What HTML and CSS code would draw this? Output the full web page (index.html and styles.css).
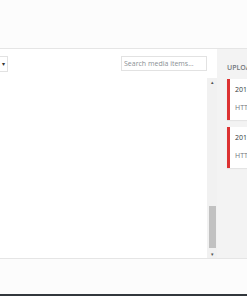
FILE: index.html
```html
<!DOCTYPE html>
<html lang="en">
<head>
    <meta charset="UTF-8">
    <meta name="viewport" content="width=device-width, initial-scale=1.0">
    <title>Media Library</title>
    <link rel="stylesheet" href="styles.css">
</head>
<body>

<div class="frame">
    <div class="frame-header"></div>

    <div class="frame-content">
        <div class="browser">
            <div class="toolbar">
                <div class="filter"><span class="caret">&#9662;</span></div>
                <input type="search" class="search" placeholder="Search media items...">
            </div>
            <div class="attachments">
                <ul class="attachment-list"></ul>
                <div class="scrollbar">
                    <span class="arrow">&#9652;</span>
                    <div class="track"><div class="thumb"></div></div>
                    <span class="arrow">&#9662;</span>
                </div>
            </div>
        </div>

        <div class="sidebar">
            <h2>Uploading</h2>
            <div class="upload-error">
                <span class="filename">2019-05-photo.jpg</span>
                <span class="message">HTTP error.</span>
            </div>
            <div class="upload-error">
                <span class="filename">2019-05-banner.png</span>
                <span class="message">HTTP error.</span>
            </div>
        </div>
    </div>

    <div class="frame-footer"></div>
</div>

</body>
</html>
```
FILE: styles.css
```css
html, body {
    margin: 0;
    padding: 0;
}
body {
    font-family: "Open Sans", Arial, sans-serif;
    background-color: #fcfcfc;
    width: 247px;
    height: 296px;
    overflow: hidden;
}
.frame {
    display: flex;
    flex-direction: column;
    height: 296px;
    border-bottom: 2px solid #32373c;
    box-sizing: border-box;
}
.frame-header {
    height: 48px;
    background: #fcfcfc;
    border-bottom: 1px solid #e5e5e5;
}
.frame-content {
    display: flex;
    height: 209px;
    border-bottom: 1px solid #e5e5e5;
}
.browser {
    flex: 1;
    display: flex;
    flex-direction: column;
    background: white;
    min-width: 0;
}
.toolbar {
    display: flex;
    justify-content: space-between;
    align-items: flex-start;
    height: 29px;
    padding: 7px 10px 0 0;
    box-sizing: border-box;
}
.filter {
    width: 70px;
    height: 16px;
    margin-left: -62px;
    border: 1px solid #e2e2e2;
    box-sizing: border-box;
    display: flex;
    align-items: center;
    justify-content: flex-end;
    padding-right: 2px;
}
.caret {
    font-size: 6px;
    line-height: 6px;
    color: #333;
}
.search {
    width: 86px;
    height: 15px;
    margin: 0;
    padding: 0 2px;
    border: 1px solid #e2e2e2;
    box-sizing: border-box;
    font-family: "Open Sans", Arial, sans-serif;
    font-size: 7px;
    color: #333;
    outline: none;
    -webkit-appearance: none;
}
.search::placeholder {
    color: #8a8f94;
}
.attachments {
    flex: 1;
    display: flex;
}
.attachment-list {
    flex: 1;
    list-style: none;
    margin: 0;
    padding: 0;
}
.scrollbar {
    width: 10px;
    display: flex;
    flex-direction: column;
    align-items: center;
    background: #f1f1f1;
}
.arrow {
    font-size: 5px;
    line-height: 8px;
    height: 8px;
    color: #505050;
}
.track {
    flex: 1;
    width: 100%;
    display: flex;
    flex-direction: column;
    justify-content: flex-end;
    align-items: center;
}
.thumb {
    width: 7px;
    height: 42px;
    background: #c1c1c1;
    margin-bottom: 2px;
}
.sidebar {
    width: 30px;
    background: #f3f3f3;
    padding: 14px 0 0 10px;
    box-sizing: border-box;
    overflow: hidden;
}
.sidebar h2 {
    margin: 0 0 6px 0;
    font-size: 7px;
    font-weight: 600;
    text-transform: uppercase;
    color: #72777c;
    white-space: nowrap;
    line-height: 10px;
}
.upload-error {
    display: flex;
    flex-direction: column;
    justify-content: space-around;
    height: 41px;
    margin-bottom: 7px;
    padding: 2px 0 4px 5px;
    box-sizing: border-box;
    background: white;
    border-left: 3px solid #dc3232;
    box-shadow: 0 1px 1px rgba(0, 0, 0, 0.06);
    white-space: nowrap;
    font-size: 7px;
}
.filename {
    color: #32373c;
}
.message {
    color: #72777c;
}
```
